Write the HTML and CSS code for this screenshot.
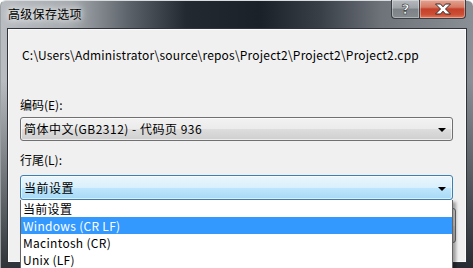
FILE: index.html
```html
<!DOCTYPE html>
<html lang="zh-CN">
<head>
  <meta charset="UTF-8">
  <title>高级保存选项</title>
  <link rel="stylesheet" href="styles.css">
</head>
<body>
  <div class="window">
    <div class="titlebar">
      <div class="title">高级保存选项</div>
      <div class="caption">
        <div class="cap-btn help"><span>?</span></div>
        <div class="cap-btn close">
          <svg width="20" height="12" viewBox="0 0 20 12">
            <path d="M2.5 1h5l2.5 2.8 2.5-2.8h5l-5 5 5 5h-5l-2.5-2.8-2.5 2.8h-5l5-5z" fill="#fff" stroke="#3a2a28" stroke-width="1" stroke-linejoin="round"/>
          </svg>
        </div>
      </div>
    </div>
    <div class="client">
      <div class="path">C:\Users\Administrator\source\repos\Project2\Project2\Project2.cpp</div>

      <div class="label label-enc">编码(E):</div>
      <div class="combo">
        <span class="combo-text">简体中文(GB2312) - 代码页 936</span>
        <span class="arrow"></span>
      </div>

      <div class="label label-eol">行尾(L):</div>
      <div class="combo-wrap">
        <div class="combo hot">
          <span class="combo-text">当前设置</span>
          <span class="arrow"></span>
        </div>
        <ul class="dropdown">
          <li>当前设置</li>
          <li class="selected">Windows (CR LF)</li>
          <li>Macintosh (CR)</li>
          <li>Unix (LF)</li>
        </ul>
      </div>

      <div class="buttons">
        <div class="btn">取消</div>
      </div>
    </div>
  </div>
</body>
</html>
```

FILE: styles.css
```css
body {
  margin: 0;
  width: 473px;
  height: 268px;
  overflow: hidden;
  font-family: "Noto Sans CJK SC", "Microsoft YaHei", sans-serif;
  font-size: 12px;
  color: #000;
}
.window {
  width: 473px;
  height: 268px;
  display: flex;
  flex-direction: column;
  box-sizing: border-box;
  border-radius: 6px 6px 0 0;
  border-top: 1px solid #d8dcdf;
  border-left: 1px solid #9aa0a4;
  background:
    linear-gradient(180deg, rgba(0,0,0,0) 0, rgba(0,0,0,0) 30%, rgba(22,27,33,0.85) 100%),
    linear-gradient(90deg, #b9bdc1 0, #a6abaf 70px, #5a6068 130px, #232930 185px, #1b2129 260px, #3a4048 320px, #6e737a 380px, #8b9096 473px);
}
.titlebar {
  height: 27px;
  display: flex;
  justify-content: space-between;
  align-items: flex-start;
  padding: 0 7px 0 7px;
}
.title {
  margin-top: 5px;
  line-height: 16px;
  font-size: 12px;
  letter-spacing: 0.3px;
  text-shadow: 0 0 6px #fff, 0 0 10px rgba(255,255,255,0.8);
}
.caption {
  display: flex;
  margin-top: -1px;
}
.cap-btn {
  height: 19px;
  box-sizing: border-box;
  border: 1px solid #3a3e44;
  border-top: none;
  display: flex;
  align-items: center;
  justify-content: center;
  box-shadow: inset 0 0 0 1px rgba(255,255,255,0.35);
}
.help {
  width: 28px;
  border-radius: 0 0 0 4px;
  border-right: none;
  background: linear-gradient(180deg, #b6babe 0, #9ea3a8 45%, #7d8288 50%, #868b90 100%);
}
.help span {
  font-family: "DejaVu Sans", sans-serif;
  font-weight: bold;
  font-size: 14px;
  line-height: 14px;
  color: #fff;
  -webkit-text-stroke: 0.6px #333;
}
.close {
  width: 47px;
  border-radius: 0 0 4px 0;
  background: linear-gradient(180deg, #e3a593 0, #d57a64 40%, #c4402a 50%, #cc4e34 80%, #dc7a5e 100%);
}
.client {
  flex: 1;
  margin: 0 6px 5px 6px;
  border: 1px solid #2e343a;
  box-shadow: inset 0 0 0 1px #fbfbfb;
  background: #f0f0f0;
  padding: 18px 10px 0 12px;
  display: flex;
  flex-direction: column;
}
.path {
  line-height: 16px;
  padding-left: 2px;
  letter-spacing: 0.2px;
}
.label {
  line-height: 16px;
}
.label-enc {
  margin-top: 34px;
}
.label-eol {
  margin-top: 11px;
}
.combo {
  margin-top: 4px;
  margin-right: 3px;
  height: 24px;
  box-sizing: border-box;
  border: 1px solid #707070;
  border-radius: 3px;
  background: linear-gradient(180deg, #f2f2f2 0, #ebebeb 50%, #dddddd 51%, #cfcfcf 100%);
  display: flex;
  align-items: center;
  justify-content: space-between;
  padding: 0 6px 0 3px;
  box-shadow: inset 0 0 0 1px rgba(255,255,255,0.6);
}
.combo-text {
  line-height: 16px;
  letter-spacing: 0.5px;
}
.arrow {
  width: 0;
  height: 0;
  border-left: 4px solid transparent;
  border-right: 4px solid transparent;
  border-top: 4px solid #000;
  margin-top: 2px;
}
.combo-wrap {
  position: relative;
  margin-top: 7px;
}
.combo.hot {
  margin-top: 0;
  height: 25px;
  border-color: #3c7fb1;
  background: linear-gradient(180deg, #eaf6fd 0, #d9f0fc 50%, #bee6fd 51%, #a7d9f5 100%);
}
.dropdown {
  position: absolute;
  top: 100%;
  left: 0;
  right: 3px;
  margin: 0;
  padding: 0;
  list-style: none;
  background: #fff;
  border: 1px solid #646464;
  border-top: none;
  box-shadow: 3px 2px 3px rgba(0,0,0,0.35);
  z-index: 5;
}
.dropdown li {
  height: 17px;
  line-height: 17px;
  padding-left: 2px;
  letter-spacing: 0.3px;
}
.dropdown li.selected {
  background: #3399ff;
  color: #fff;
}
.buttons {
  display: flex;
  justify-content: flex-end;
  margin-top: 8px;
}
.btn {
  width: 75px;
  height: 35px;
  box-sizing: border-box;
  border: 1px solid #707070;
  border-radius: 3px;
  background: linear-gradient(180deg, #f2f2f2 0, #ebebeb 50%, #dddddd 51%, #cfcfcf 100%);
  display: flex;
  align-items: center;
  justify-content: center;
}
```
